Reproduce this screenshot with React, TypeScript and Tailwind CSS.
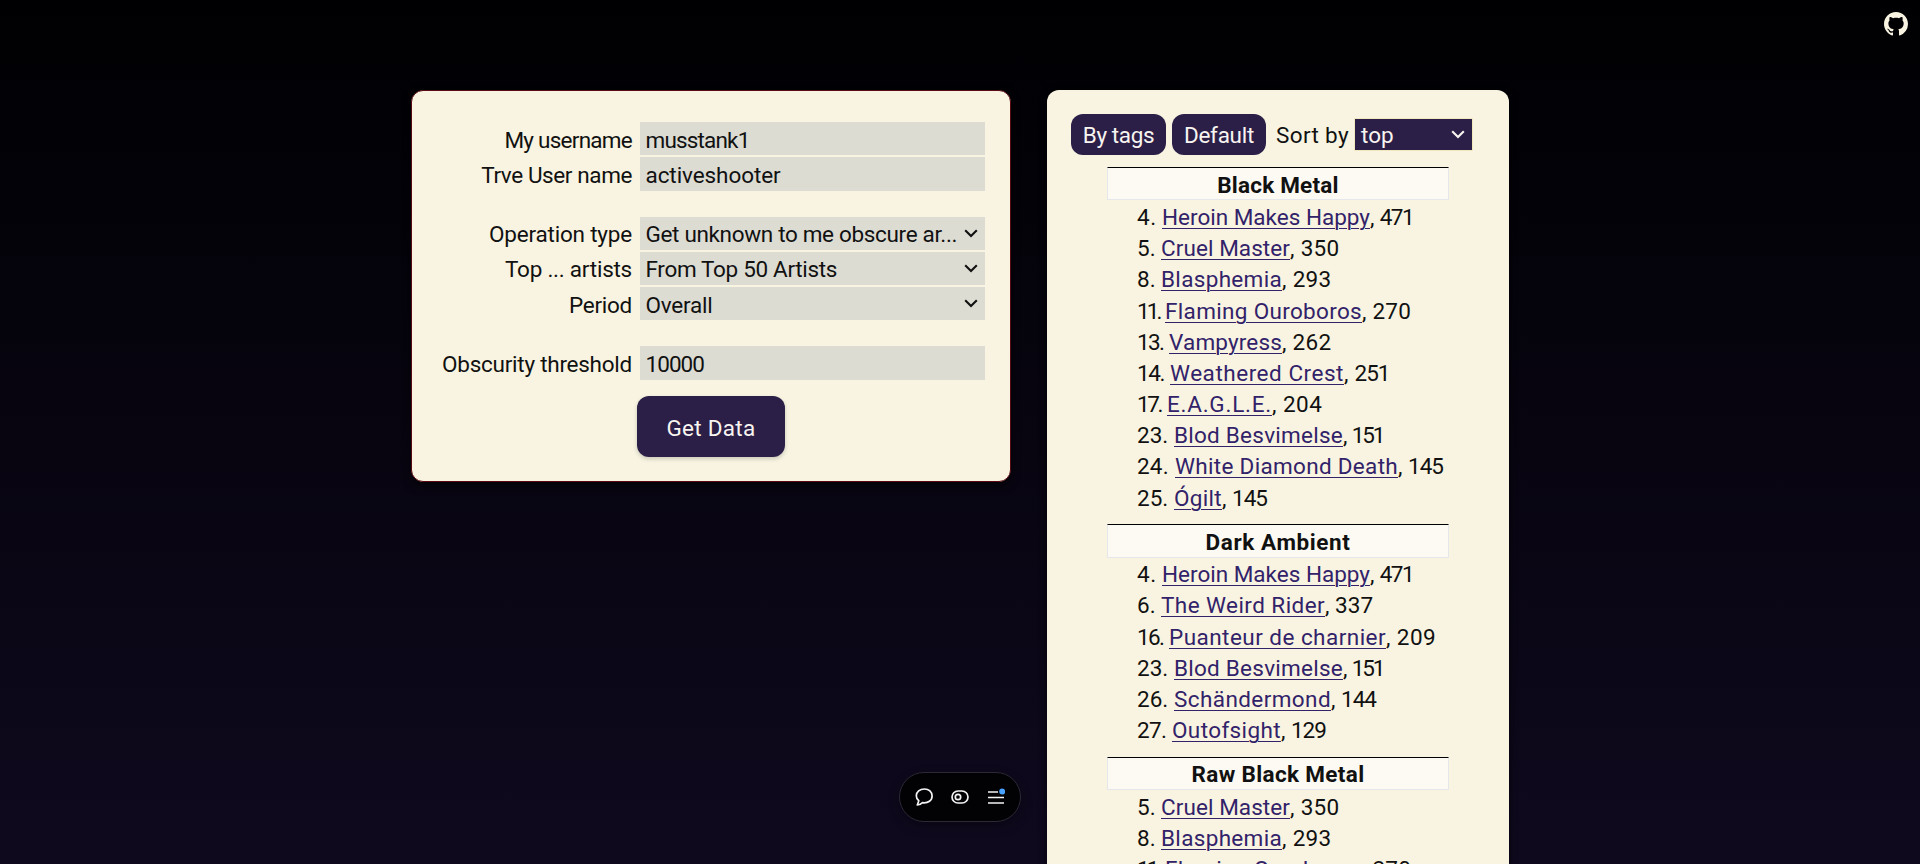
import type { ReactNode } from "react";

type Item = {
  rank: string;
  rankClass: string;
  name: string;
  nameClass: string;
  count: string;
  countClass: string;
};

const heroin: Item = { rank: "4.", rankClass: "w-[25px] tracking-[0.7px]", name: "Heroin Makes Happy", nameClass: "tracking-[0px]", count: ", 471", countClass: "tracking-[-1.6px] [word-spacing:3px]" };
const cruel: Item = { rank: "5.", rankClass: "w-[24px] tracking-[0.2px]", name: "Cruel Master", nameClass: "tracking-[0.08px]", count: ", 350", countClass: "tracking-[0.3px]" };
const blasphemia: Item = { rank: "8.", rankClass: "w-[24px] tracking-[0.2px]", name: "Blasphemia", nameClass: "tracking-[0.33px]", count: ", 293", countClass: "tracking-[0.3px]" };
const flaming: Item = { rank: "11.", rankClass: "w-[28px] tracking-[-2.9px]", name: "Flaming Ouroboros", nameClass: "tracking-[0.33px]", count: ", 270", countClass: "tracking-[0.2px]" };
const blod: Item = { rank: "23.", rankClass: "w-[37px] tracking-[0px]", name: "Blod Besvimelse", nameClass: "tracking-[0.25px]", count: ", 151", countClass: "tracking-[-2.1px] [word-spacing:3px]" };

const groups: { title: string; titleClass: string; items: Item[] }[] = [
  {
    title: "Black Metal",
    titleClass: "tracking-[0.21px]",
    items: [
      heroin,
      cruel,
      blasphemia,
      flaming,
      { rank: "13.", rankClass: "w-[32px] tracking-[-1.7px]", name: "Vampyress", nameClass: "tracking-[0.16px]", count: ", 262", countClass: "tracking-[0.3px]" },
      { rank: "14.", rankClass: "w-[33px] tracking-[-1.4px]", name: "Weathered Crest", nameClass: "tracking-[0.53px]", count: ", 251", countClass: "tracking-[-1px] [word-spacing:2.5px]" },
      { rank: "17.", rankClass: "w-[30px] tracking-[-2.4px]", name: "E.A.G.L.E.", nameClass: "tracking-[0.76px]", count: ", 204", countClass: "tracking-[0.5px]" },
      blod,
      { rank: "24.", rankClass: "w-[38px] tracking-[0.2px]", name: "White Diamond Death", nameClass: "tracking-[0.31px]", count: ", 145", countClass: "tracking-[-1px] [word-spacing:2px]" },
      { rank: "25.", rankClass: "w-[37px] tracking-[0px]", name: "Ógilt", nameClass: "tracking-[0.32px]", count: ", 145", countClass: "tracking-[-1px] [word-spacing:2px]" },
    ],
  },
  {
    title: "Dark Ambient",
    titleClass: "tracking-[0.6px]",
    items: [
      heroin,
      { rank: "6.", rankClass: "w-[24px] tracking-[0.2px]", name: "The Weird Rider", nameClass: "tracking-[0.43px]", count: ", 337", countClass: "tracking-[0px]" },
      { rank: "16.", rankClass: "w-[32px] tracking-[-1.7px]", name: "Puanteur de charnier", nameClass: "tracking-[0.46px]", count: ", 209", countClass: "tracking-[0.4px]" },
      blod,
      { rank: "26.", rankClass: "w-[37px] tracking-[0px]", name: "Schändermond", nameClass: "tracking-[0.41px]", count: ", 144", countClass: "tracking-[-1px] [word-spacing:2px]" },
      { rank: "27.", rankClass: "w-[35px] tracking-[-0.7px]", name: "Outofsight", nameClass: "tracking-[0.38px]", count: ", 129", countClass: "tracking-[-1px] [word-spacing:2px]" },
    ],
  },
  { title: "Raw Black Metal", titleClass: "tracking-[0.35px]", items: [cruel, blasphemia, flaming] },
];

function Chevron() {
  return (
    <svg width="14" height="9" viewBox="0 0 14 9" fill="none" stroke="currentColor" strokeWidth="2.1" className="shrink-0">
      <path d="M1.2 1.2 7 7l5.8-5.8" />
    </svg>
  );
}

function Row({ label, labelClass, valueClass, value, rowClass, select }: { label: string; labelClass: string; value: string; valueClass: string; rowClass: string; select?: boolean }) {
  return (
    <div className={`flex whitespace-pre ${rowClass}`}>
      <div className={`flex w-[220px] items-center justify-end ${labelClass}`}>{label}</div>
      <div className="ml-2 flex w-[345px] items-center justify-between bg-[#dcdcd3] pr-[7px] pl-[5.5px]">
        <span className={valueClass}>{value}</span>
        {select && <Chevron />}
      </div>
    </div>
  );
}

function PillButton({ children, className }: { children: ReactNode; className: string }) {
  return <button className={`h-[41px] shrink-0 rounded-[12px] bg-[#2b1f47] pt-[3px] text-center text-[#f8f4f0] ${className}`}>{children}</button>;
}

export default function App() {
  return (
    <div className="relative h-[864px] w-full overflow-hidden bg-[linear-gradient(to_bottom,#000002,#0f091e)] font-['Roboto','Noto_Sans',sans-serif] text-[22.5px] text-[#111111]">
      <svg className="absolute top-[12px] right-[12px]" width="24" height="24" viewBox="0 0 16 16" fill="#f8f4e1">
        <path d="M8 0C3.58 0 0 3.58 0 8c0 3.54 2.29 6.53 5.47 7.59.4.07.55-.17.55-.38 0-.19-.01-.82-.01-1.49-2.01.37-2.53-.49-2.69-.94-.09-.23-.48-.94-.82-1.13-.28-.15-.68-.52-.01-.53.63-.01 1.08.58 1.23.82.72 1.21 1.87.87 2.33.66.07-.52.28-.87.51-1.07-1.78-.2-3.64-.89-3.64-3.95 0-.87.31-1.59.82-2.15-.08-.2-.36-1.02.08-2.12 0 0 .67-.21 2.2.82.64-.18 1.32-.27 2-.27s1.36.09 2 .27c1.53-1.04 2.2-.82 2.2-.82.44 1.1.16 1.92.08 2.12.51.56.82 1.27.82 2.15 0 3.07-1.87 3.75-3.65 3.95.29.25.54.73.54 1.48 0 1.07-.01 1.93-.01 2.2 0 .21.15.46.55.38A8.01 8.01 0 0 0 16 8c0-4.42-3.58-8-8-8z" />
      </svg>

      <main className="flex items-start gap-[36px] pt-[90px] pl-[411px]">
        <form className="flex h-[392px] w-[600px] flex-col rounded-[12px] border border-[#5a0a12] bg-[#f8f4e1] pt-[31px] shadow-[0_4px_8px_rgba(0,0,0,0.6)]">
          <Row rowClass="h-[33px] [&>div:first-child]:pt-[4px] [&_span]:pt-[4px]" label="My username" labelClass="tracking-[-0.75px]" value="musstank1" valueClass="tracking-[-0.83px]" />
          <Row rowClass="mt-[2px] h-[34px] [&>div:first-child]:pt-[3px] [&_span]:pt-[3px]" label="Trve User name" labelClass="tracking-[-0.4px]" value="activeshooter" valueClass="tracking-[-0.08px]" />
          <Row select rowClass="mt-[26px] h-[33px] [&>div:first-child]:pt-[2px] [&_span]:pt-[2px]" label="Operation type" labelClass="tracking-[-0.19px]" value="Get unknown to me obscure ar..." valueClass="tracking-[-0.33px]" />
          <Row select rowClass="mt-[2px] h-[33px] [&>div:first-child]:pt-[2px] [&_span]:pt-[2px]" label="Top ... artists" labelClass="tracking-[-0.24px]" value="From Top 50 Artists" valueClass="tracking-[-0.33px]" />
          <Row select rowClass="mt-[2px] h-[33px] [&>div:first-child]:pt-[4px] [&_span]:pt-[4px]" label="Period" labelClass="tracking-[-0.27px]" value="Overall" valueClass="tracking-[-0.22px]" />
          <Row rowClass="mt-[26px] h-[34px] [&>div:first-child]:pt-[3px] [&_span]:pt-[3px]" label="Obscurity threshold" labelClass="tracking-[-0.25px]" value="10000" valueClass="tracking-[-0.95px]" />
          <button className="mt-[16px] h-[61px] w-[148px] self-center rounded-[12px] bg-[#2b1f47] pt-[4px] tracking-[0.27px] text-[#f8f4f0] shadow-[0_2px_4px_rgba(0,0,0,0.18)]">Get Data</button>
        </form>

        <section className="h-[900px] w-[462px] rounded-t-[12px] bg-[#f8f4e1] pt-[24px] shadow-[0_4px_8px_rgba(0,0,0,0.6)]">
          <div className="flex h-[41px] items-center pl-[24px] whitespace-nowrap">
            <PillButton className="w-[95px] tracking-[-0.37px]">By tags</PillButton>
            <PillButton className="ml-[6px] w-[94px] tracking-[-0.28px]">Default</PillButton>
            <span className="ml-[10px] w-[78px] pt-[3px] tracking-[0.36px]">Sort by</span>
            <div className="flex h-[33px] w-[119px] items-center justify-between border border-[#f3e7bf] bg-[#2b1f47] pr-[7px] pl-[6px] text-[#f8f4f0]">
              <span className="pt-[3px]">top</span>
              <Chevron />
            </div>
          </div>

          <div className="mt-[12px] ml-[60px] w-[342px]">
            {groups.map((group) => (
              <div key={group.title}>
                <h2 className={`h-[33.4px] border border-[#e5e7eb] border-t-black bg-[#fdfaf3] pt-[2.6px] text-center leading-[29.2px] font-bold ${group.titleClass}`}>{group.title}</h2>
                <ul className="mt-[1.6px] pb-[10.4px] pl-[30px]">
                  {group.items.map((item) => (
                    <li key={item.rank} className="flex h-[31.2px] leading-[31.2px] whitespace-pre">
                      <span className={item.rankClass}>{item.rank}</span>
                      <a className={`text-[#32226a] underline decoration-1 underline-offset-[3px] ${item.nameClass}`}>{item.name}</a>
                      <span className={item.countClass}>{item.count}</span>
                    </li>
                  ))}
                </ul>
              </div>
            ))}
          </div>
        </section>
      </main>

      <div className="absolute top-[772px] left-[899px] flex h-[50px] w-[122px] items-center justify-between rounded-full border border-[#2c2936] bg-[#020104] px-[15px] text-[#f4f4f4] shadow-[0_4px_12px_rgba(0,0,0,0.3)]">
        <svg width="18" height="18" viewBox="0 0 18 18" fill="none" stroke="currentColor" strokeWidth="1.7" strokeLinejoin="round">
          <path d="M9.500 1C4.800 1 1.300 3.700 1.300 7.800c0 2.200 1 3.800 2.500 4.900L2.300 17c2.200-.2 4-1.100 5-2.300 6 .8 9.800-2.300 9.800-6.700C17.100 3.800 13.800 1 9.500 1Z" />
        </svg>
        <svg width="18" height="14" viewBox="0 0 18 14" fill="none" stroke="currentColor" strokeWidth="1.7">
          <rect x="1" y="1" width="16" height="12" rx="6" />
          <circle cx="7" cy="7" r="2.7" />
        </svg>
        <svg width="18" height="18" viewBox="0 0 18 18" fill="none" stroke="currentColor" strokeWidth="1.6">
          <path d="M1 4h10M1 9.500h16M1 15h16" />
          <circle cx="15.2" cy="3.600" r="3" fill="#47a3ff" stroke="none" />
        </svg>
      </div>
    </div>
  );
}
